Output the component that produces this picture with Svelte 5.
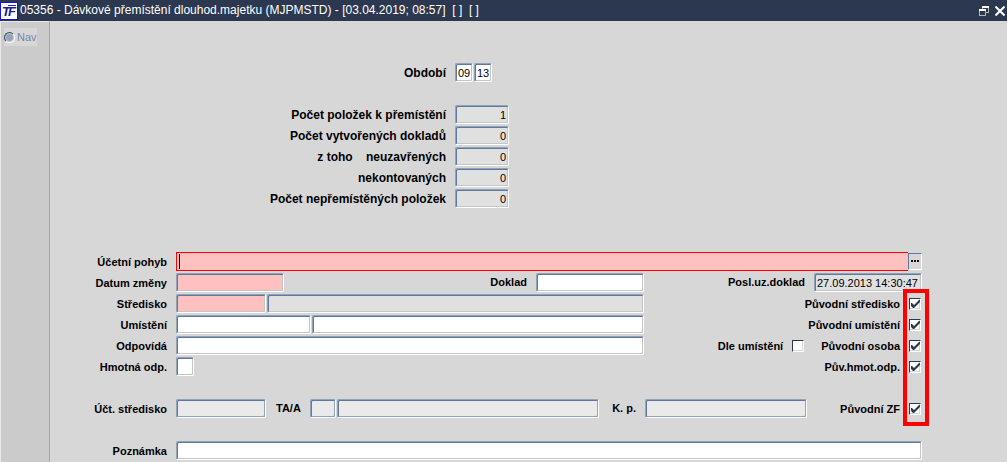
<script lang="ts">
  const title = '05356 - Dávkové přemístění dlouhod.majetku (MJPMSTD) - [03.04.2019; 08:57]\u00a0 [ ]\u00a0 [ ]';

  let month = '09';
  let year = '13';

  const counts = [
    { id: 'cnt-move', label: 'Počet položek k přemístění', value: '1' },
    { id: 'cnt-docs', label: 'Počet vytvořených dokladů', value: '0' },
    { id: 'cnt-open', label: 'z toho\u00a0\u00a0\u00a0 neuzavřených', value: '0' },
    { id: 'cnt-unposted', label: 'nekontovaných', value: '0' },
    { id: 'cnt-failed', label: 'Počet nepřemístěných položek', value: '0' }
  ];

  let form = {
    movement: '',
    date: '',
    doc: '',
    center: '',
    place: '',
    placeName: '',
    person: '',
    material: '',
    note: ''
  };

  let keep = { center: true, place: true, person: true, material: true, zf: true };
  let byPlace = false;
</script>

<div class="window">
  <header class="titlebar">
    <svg class="logo" width="18" height="18" viewBox="0 0 18 18" aria-hidden="true">
      <rect x="0.5" y="0.5" width="17" height="17" fill="#fff" stroke="#1010f0" />
      <text x="2" y="14" class="logo-text">T</text>
      <text x="8" y="14" class="logo-text">F</text>
      <path d="M3 5.500h3M8 3.500h8" stroke="#2020c0" />
    </svg>
    <h1>{title}</h1>
    <button class="win-btn" aria-label="Obnovit">
      <svg width="10" height="10" viewBox="0 0 10 10" shape-rendering="crispEdges">
        <path d="M3 1h7" stroke="#fff" stroke-width="2" />
        <path d="M3.5 2v1M9.5 2v4.5H7" fill="none" stroke="#b4b4ac" />
        <path d="M0 4h7" stroke="#fff" stroke-width="2" />
        <path d="M0.5 5v4.5h6V5" fill="none" stroke="#b4b4ac" />
      </svg>
    </button>
    <button class="win-btn" aria-label="Zavřít">
      <svg width="10" height="10" viewBox="0 0 10 10">
        <path d="M0.5 0.5l9 9M9.5 0.5l-9 9" stroke="#fff" stroke-width="2" />
      </svg>
    </button>
  </header>

  <div class="body">
    <aside class="sidebar">
      <button class="nav"><span class="dot"></span>Nav</button>
    </aside>

    <main>
      <section class="summary">
        <div class="row period">
          <label class="label" for="month">Období</label>
          <input id="month" class="field tiny" bind:value={month} />
          <input class="field tiny" aria-label="Rok" bind:value={year} />
        </div>
        {#each counts as item}
          <div class="row">
            <label class="label" for={item.id}>{item.label}</label>
            <input id={item.id} class="field readonly number" readonly value={item.value} />
          </div>
        {/each}
      </section>

      <section class="form">
        <div class="row">
          <label class="label" for="movement">Účetní pohyb</label>
          <div class="active">
            <input id="movement" bind:value={form.movement} />
            <span class="caret"></span>
          </div>
          <button class="more" aria-label="Seznam hodnot"><i></i><i></i><i></i></button>
        </div>

        <div class="row">
          <label class="label" for="date">Datum změny</label>
          <div class="left">
            <input id="date" class="field required w-date" bind:value={form.date} />
            <label class="inner push" for="doc">Doklad</label>
            <input id="doc" class="field w-date" bind:value={form.doc} />
          </div>
          <div class="right">
            <label class="inner" for="last">Posl.uz.doklad</label>
            <input id="last" class="field readonly w-date" readonly value="27.09.2013 14:30:47" />
          </div>
        </div>

        <div class="marked">
          <div class="row">
            <label class="label" for="center">Středisko</label>
            <div class="left">
              <input id="center" class="field required w-code" bind:value={form.center} />
              <input class="field readonly grow" aria-label="Název střediska" readonly />
            </div>
            <div class="right">
              <label class="check">Původní středisko <input type="checkbox" bind:checked={keep.center} /></label>
            </div>
          </div>

          <div class="row">
            <label class="label" for="place">Umístění</label>
            <div class="left">
              <input id="place" class="field w-place" bind:value={form.place} />
              <input class="field grow" aria-label="Název umístění" bind:value={form.placeName} />
            </div>
            <div class="right">
              <label class="check">Původní umístění <input type="checkbox" bind:checked={keep.place} /></label>
            </div>
          </div>

          <div class="row">
            <label class="label" for="person">Odpovídá</label>
            <div class="left">
              <input id="person" class="field grow" bind:value={form.person} />
            </div>
            <div class="right">
              <label class="check">Dle umístění <input type="checkbox" bind:checked={byPlace} /></label>
              <label class="check">Původní osoba <input type="checkbox" bind:checked={keep.person} /></label>
            </div>
          </div>

          <div class="row">
            <label class="label" for="material">Hmotná odp.</label>
            <div class="left">
              <input id="material" class="field tiny" bind:value={form.material} />
            </div>
            <div class="right">
              <label class="check">Pův.hmot.odp. <input type="checkbox" bind:checked={keep.material} /></label>
            </div>
          </div>

          <div class="row spaced">
            <label class="label" for="acc-center">Účt. středisko</label>
            <div class="left">
              <input id="acc-center" class="field disabled w-code" readonly />
              <label class="inner first" for="ta">TA/A</label>
              <input id="ta" class="field disabled w-ta" readonly />
              <input class="field disabled grow" aria-label="Název TA/A" readonly />
              <label class="inner kp" for="kp">K. p.</label>
            </div>
            <div class="right">
              <input id="kp" class="field disabled w-kp" readonly />
              <label class="check push">Původní ZF <input type="checkbox" bind:checked={keep.zf} /></label>
            </div>
          </div>
          <div class="marker"></div>
        </div>

        <div class="row spaced">
          <label class="label" for="note">Poznámka</label>
          <input id="note" class="field grow" bind:value={form.note} />
        </div>
      </section>
    </main>
  </div>
</div>

<style>
  :global(body) {
    background: #d7d7d7;
  }

  .window {
    display: flex;
    flex-direction: column;
    min-height: 100vh;
    background: #d7d7d7;
    color: #000;
    font: 11px/19px 'Liberation Sans', Arial, sans-serif;
    overflow: hidden;
  }

  input,
  button {
    box-sizing: border-box;
    margin: 0;
    padding: 0;
    font: inherit;
    color: inherit;
    outline: none;
  }

  .titlebar {
    display: flex;
    align-items: center;
    height: 21px;
    background: #2b384f;
    color: #fff;
  }

  .logo {
    flex: none;
  }

  .logo-text {
    font: italic bold 13px 'Liberation Sans', Arial, sans-serif;
    fill: #1a1a90;
  }

  h1 {
    flex: 1;
    min-width: 0;
    margin: 0 0 0 2px;
    font-size: 12px;
    font-weight: normal;
    white-space: nowrap;
  }

  .win-btn {
    display: flex;
    flex: none;
    margin-right: 2px;
    margin-left: 4px;
    border: 0;
    background: none;
  }

  .body {
    display: flex;
    flex: 1;
  }

  .sidebar {
    box-sizing: border-box;
    flex: none;
    width: 50px;
    padding: 6px 0 0 3px;
    border-left: 1px solid #e8e8e8;
    border-right: 1px solid #97a5b8;
    border-top: 1px solid #e8e8e8;
    background: #cbcbcb;
  }

  .nav {
    display: flex;
    align-items: center;
    gap: 2px;
    height: 18px;
    border: 0;
    background: #d7d7d7;
    color: #7688a8;
    font-size: 11px;
  }

  .dot {
    box-sizing: border-box;
    flex: none;
    width: 11px;
    height: 11px;
    border: 1px solid;
    border-color: #3d4c66 #fff #fff #3d4c66;
    border-radius: 50%;
    background: #97a5b8;
    box-shadow: inset 0 0 0 1px #c4cad2;
  }

  main {
    flex: 1;
    min-width: 0;
    padding: 41px 85px 0 0;
  }

  .row {
    display: flex;
    align-items: center;
    gap: 1px;
    height: 21px;
  }

  .label,
  .inner,
  .check {
    font-weight: bold;
    line-height: 21px;
    white-space: nowrap;
  }

  .label {
    flex: none;
    width: 117px;
    padding-top: 1px;
    padding-right: 8px;
    text-align: right;
  }

  .summary .label {
    width: 396px;
    font-size: 12px;
  }

  .period {
    margin-bottom: 21px;
  }

  .form {
    margin-top: 42px;
  }

  .inner {
    padding-right: 8px;
  }

  .inner.first {
    padding-left: 9px;
  }

  .inner.kp {
    padding-left: 12px;
  }

  .push {
    margin-left: auto;
  }

  .left {
    display: flex;
    flex: 1;
    gap: 1px;
    min-width: 0;
  }

  .right {
    display: flex;
    flex: none;
    justify-content: flex-end;
    gap: 1px;
    width: 277px;
  }

  .left,
  .right {
    align-items: center;
  }

  .field {
    flex: none;
    height: 19px;
    padding: 1px 2px 0;
    border: 1px solid;
    border-color: #8fa3ba #fff #fff #8fa3ba;
    border-radius: 2px;
    background: #fff;
    box-shadow: inset 1px 1px #5f789b, inset -1px -1px #c6c6c6;
  }

  .required {
    background: #ffc0c0;
  }

  .readonly {
    background: #e0e0e0;
  }

  .disabled {
    background: #eaeaea;
    box-shadow: inset 1px 1px #5f789b, inset -1px -1px #8fa3ba;
  }

  .number {
    width: 54px;
    text-align: right;
  }

  .tiny {
    width: 18px;
  }

  .w-date {
    width: 108px;
  }

  .w-code {
    width: 90px;
  }

  .w-place {
    width: 135px;
  }

  .w-ta {
    width: 26px;
  }

  .w-kp {
    width: 162px;
  }

  .grow {
    flex: 1;
    min-width: 0;
  }

  .active {
    position: relative;
    display: flex;
    flex: 1;
    height: 17px;
    border: 1px solid #f00;
    border-right: 0;
    margin-right: -1px;
  }

  .active input {
    width: 100%;
    padding: 0 3px;
    border: 0;
    background: #ffc0c0;
  }

  .caret {
    position: absolute;
    top: 1px;
    bottom: 1px;
    left: 2px;
    width: 1px;
    background: #000;
  }

  .more {
    display: flex;
    justify-content: center;
    align-items: center;
    gap: 1px;
    width: 14px;
    height: 17px;
    padding-bottom: 2px;
    border: 1px solid;
    border-color: #5f789b #fff #fff #5f789b;
    background: #d7d7d7;
  }

  .more i {
    width: 2px;
    height: 2px;
    background: #200000;
  }

  .check {
    display: flex;
    align-items: center;
    gap: 9px;
    margin-left: 15px;
    padding-top: 1px;
    padding-right: 1px;
  }

  .check.push {
    margin-left: auto;
  }

  .check input {
    appearance: none;
    width: 12px;
    height: 12px;
    border: 1px solid;
    border-color: #2b384f #fff #fff #2b384f;
    background: #fff;
    box-shadow: inset -1px -1px #d7d7d7;
  }

  .check input:checked::before {
    content: '';
    display: block;
    width: 10px;
    height: 10px;
    background: #2b384f;
    clip-path: polygon(10% 40%, 20% 40%, 40% 60%, 90% 10%, 100% 10%, 100% 30%, 40% 90%, 30% 90%, 10% 70%);
  }

  .marked {
    position: relative;
  }

  .spaced {
    margin-top: 21px;
  }

  .marker {
    position: absolute;
    top: -4px;
    right: -7px;
    bottom: -7px;
    box-sizing: border-box;
    width: 26px;
    border: 4px solid #f00;
    pointer-events: none;
  }
</style>
